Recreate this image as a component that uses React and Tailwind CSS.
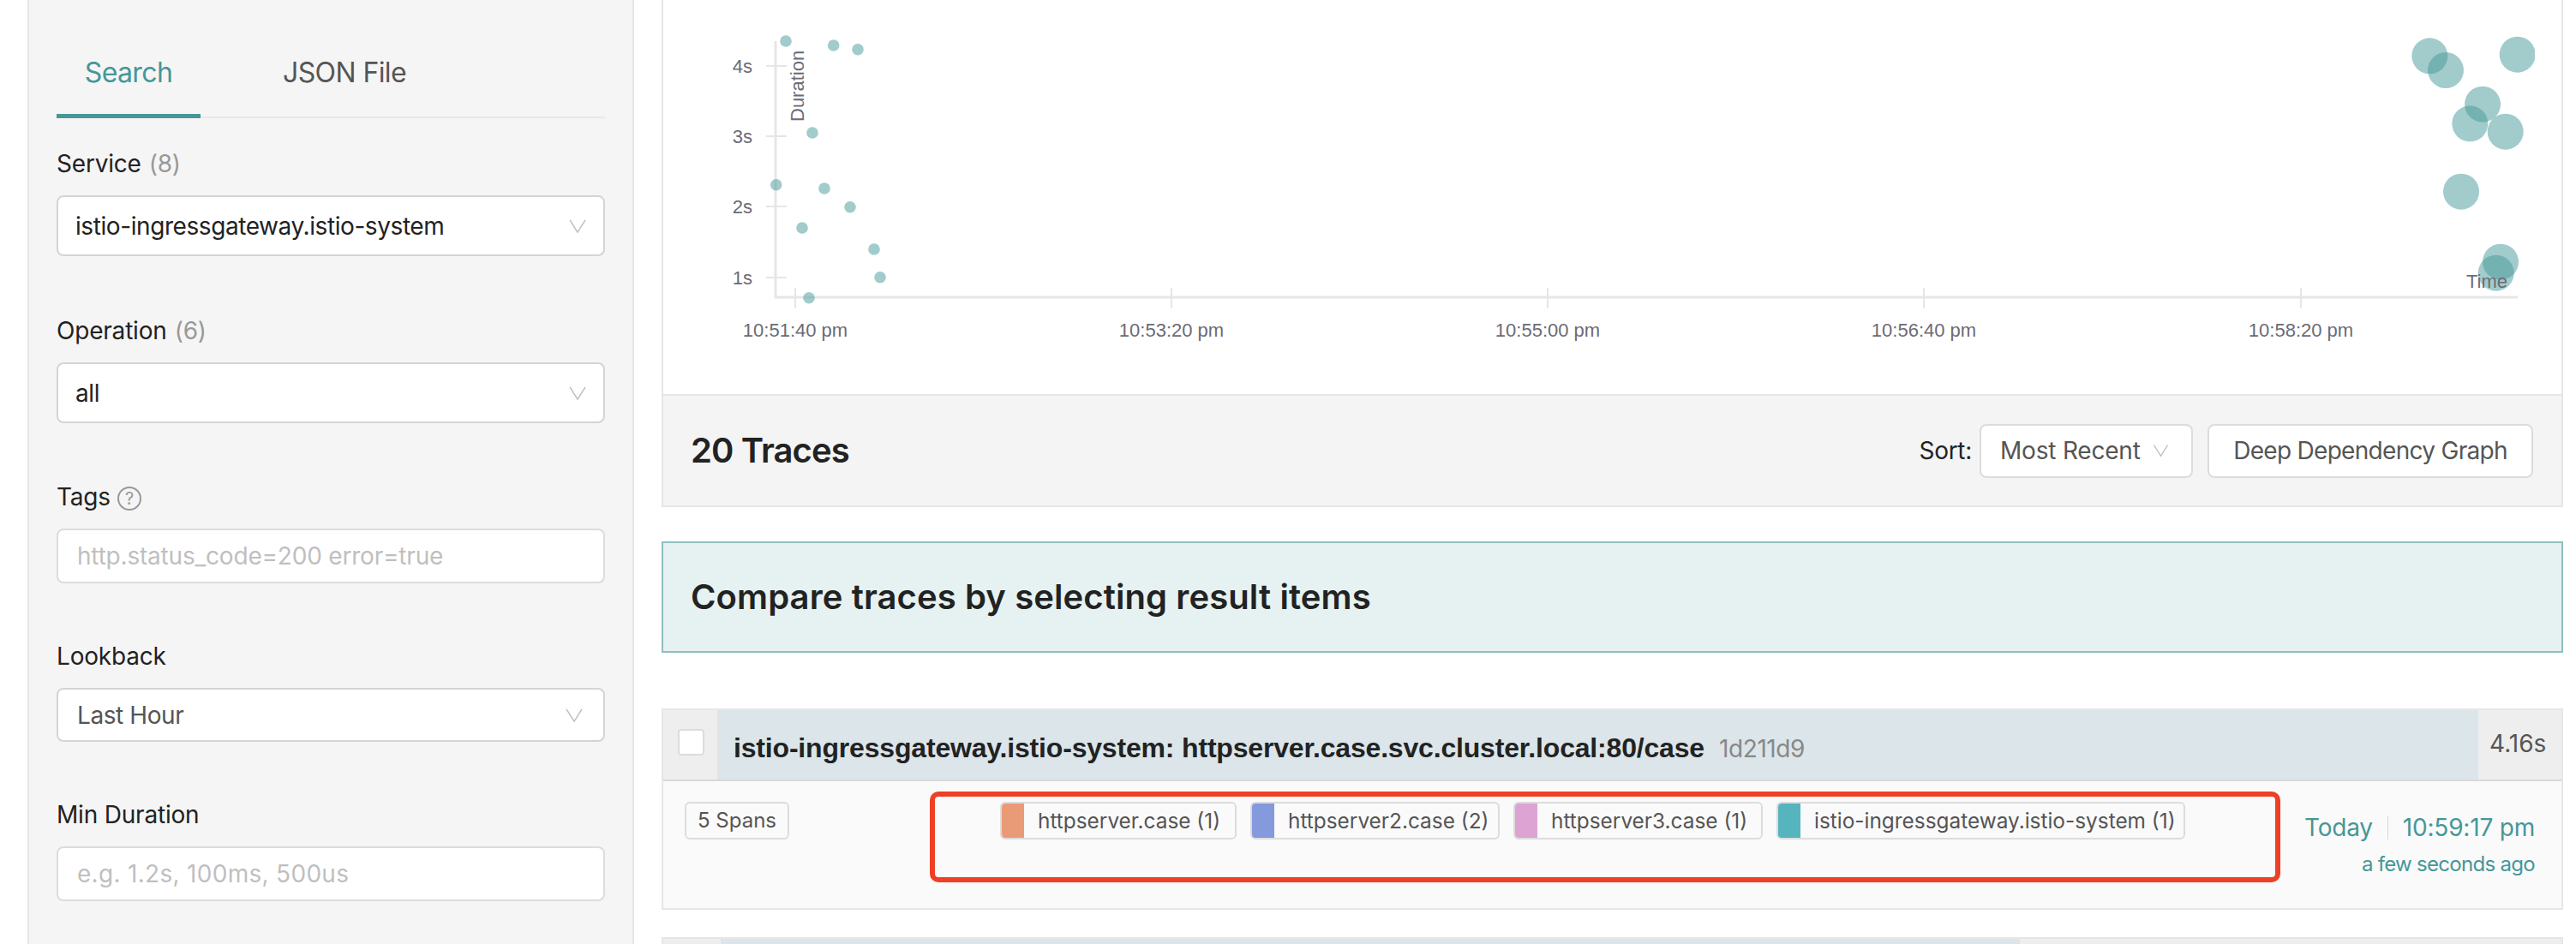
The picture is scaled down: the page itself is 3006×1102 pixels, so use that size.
import React from "react";

const smallDots = [
  [917, 48], [972.7, 53], [1001, 57.7], [948, 155], [905.7, 215.7], [962, 220],
  [992, 241.7], [936, 266], [1020, 291], [1027, 323.7], [944, 347.7],
];
const bigDots = [
  [2835.3, 65.3], [2854, 82], [2937.7, 63.7], [2897, 121.7], [2882.3, 144.3],
  [2923.7, 153.7], [2872, 223.7], [2918, 305.7], [2912.7, 318.7],
];
const yTicks = [["4s", 77], ["3s", 159], ["2s", 241], ["1s", 324]];
const xTicks = [
  ["10:51:40 pm", 928], ["10:53:20 pm", 1367], ["10:55:00 pm", 1806],
  ["10:56:40 pm", 2245], ["10:58:20 pm", 2685],
];
const services = [
  { name: "httpserver.case (1)", color: "bg-[#e99b78]", width: "w-[276px]" },
  { name: "httpserver2.case (2)", color: "bg-[#8599dd]", width: "w-[291px]" },
  { name: "httpserver3.case (1)", color: "bg-[#dda3d3]", width: "w-[291px]" },
  { name: "istio-ingressgateway.istio-system (1)", color: "bg-[#56b4bf]", width: "w-[477px]" },
];

function Chevron({ className }) {
  return (
    <svg viewBox="0 0 22 20" fill="none" stroke="#bdbdbd" strokeWidth="1.6" className={className}>
      <path d="M1 2 L11 18 L21 2" />
    </svg>
  );
}

function Field({ label, count, help, className, children }) {
  return (
    <div className={className}>
      <div className="h-[38px] mb-[18px] flex items-center text-[28px] tracking-[-0.2px] text-[#222]">
        {label}
        {count && <span className="ml-[9px] text-[#999]">{count}</span>}
        {help && (
          <span className="ml-[8px] mt-[3px] w-[28px] h-[28px] rounded-full border-2 border-[#999] flex items-center justify-center text-[20px] text-[#999]">
            ?
          </span>
        )}
      </div>
      {children}
    </div>
  );
}

function SelectBox({ value, tall, muted }) {
  return (
    <div
      className={`flex items-center justify-between bg-white border-2 border-[#d4d4d4] rounded-[8px] text-[28px] tracking-[-0.42px] ${
        tall ? "h-[71px] pl-[20px] pr-[20px] text-[#222]" : "h-[63px] pl-[22px] pr-[24px]"
      } ${muted ? "text-[#555]" : ""}`}
    >
      <span>{value}</span>
      <Chevron className="w-[20px] h-[18px]" />
    </div>
  );
}

function TextInput({ placeholder, className }) {
  return (
    <input
      readOnly
      placeholder={placeholder}
      className={`block w-full h-[64px] bg-white border-2 border-[#dcdcdc] rounded-[8px] pl-[22px] text-[28px] placeholder:text-[#bfbfbf] outline-none ${className}`}
    />
  );
}

function Sidebar() {
  return (
    <aside className="ml-[32px] w-[708px] h-full bg-[#f5f5f5] border-x-2 border-[#e6e6e6] pl-[32px] pr-[32px] font-['Inter',sans-serif]">
      <div className="flex h-[138px] border-b-2 border-[#e8e8e8] text-[32px] tracking-[-0.6px] mb-[34px]">
        <div className="w-[168px] h-[138px] border-b-[5px] border-[#459798] text-[#459798] flex justify-center pt-[63px] leading-[44px]">
          Search
        </div>
        <div className="ml-[96px] text-[#555] pt-[63px] leading-[44px]">JSON File</div>
      </div>
      <Field label="Service" count="(8)" className="mb-[68px]">
        <SelectBox value="istio-ingressgateway.istio-system" tall />
      </Field>
      <Field label="Operation" count="(6)" className="mb-[67px]">
        <SelectBox value="all" tall />
      </Field>
      <Field label="Tags" help className="mb-[66px]">
        <TextInput placeholder="http.status_code=200 error=true" className="tracking-[-0.2px]" />
      </Field>
      <Field label="Lookback" className="mb-[66px]">
        <SelectBox value="Last Hour" muted />
      </Field>
      <Field label="Min Duration">
        <TextInput placeholder="e.g. 1.2s, 100ms, 500us" className="tracking-[0.3px]" />
      </Field>
    </aside>
  );
}

function ScatterPlot() {
  return (
    <svg viewBox="774 0 2215 460" className="block w-[2215px] h-[460px] font-['Liberation_Sans',sans-serif]">
      <defs>
        <clipPath id="plot">
          <rect x="774" y="0" width="2184" height="460" />
        </clipPath>
      </defs>
      <g stroke="#e6e6e8">
        <path d="M905 48 V348" strokeWidth="3" />
        <path d="M904 347 H2938" strokeWidth="3" />
        {yTicks.map(([, y]) => (
          <path key={y} d={`M894 ${y} H918`} strokeWidth="2" />
        ))}
        {xTicks.map(([, x]) => (
          <path key={x} d={`M${x} 336 V360`} strokeWidth="2" />
        ))}
      </g>
      <g fill="#6b6b76" fontSize="22">
        {yTicks.map(([label, y]) => (
          <text key={label} x="878" y={y + 8} textAnchor="end">{label}</text>
        ))}
        {xTicks.map(([label, x]) => (
          <text key={label} x={x} y="393" textAnchor="middle">{label}</text>
        ))}
      </g>
      <g fill="#459798" fillOpacity="0.5" clipPath="url(#plot)">
        {smallDots.map(([x, y]) => (
          <circle key={x} cx={x} cy={y} r="6.8" />
        ))}
        {bigDots.map(([x, y]) => (
          <circle key={x} cx={x} cy={y} r="21" />
        ))}
      </g>
      <g fill="#6b6b76" fontSize="22">
        <text transform="translate(938 142) rotate(-90)">Duration</text>
        <text x="2878" y="336">Time</text>
      </g>
    </svg>
  );
}

function TraceCard() {
  return (
    <div className="mt-[65px] h-[235px] border-2 border-[#e6e6e6] bg-[#fafafa]">
      <div className="flex h-[83px] border-b-2 border-[#d8d8d8] bg-[#dbe5ea]">
        <div className="w-[65px] bg-[#eeeeee] border-r-2 border-[#e2e2e2] flex pl-[17px] pt-[22px]">
          <div className="w-[31px] h-[31px] bg-white border-2 border-[#dcdcdc] rounded-[4px]" />
        </div>
        <div className="flex-1 flex items-baseline pl-[17px] pt-[20px] text-[#222]">
          <span className="text-[32px] tracking-[-0.18px] font-semibold font-['Liberation_Sans',sans-serif]">
            istio-ingressgateway.istio-system: httpserver.case.svc.cluster.local:80/case
          </span>
          <span className="ml-[17px] text-[28px] tracking-[-0.4px] text-[#888] font-['Inter',sans-serif]">1d211d9</span>
        </div>
        <div className="w-[97px] bg-[#eeeeee] text-[28px] text-[#555] pl-[13px] pt-[18px] font-['Inter',sans-serif]">
          4.16s
        </div>
      </div>
      <div className="relative flex h-[150px] pl-[25px] pt-[24px] font-['Inter',sans-serif]">
        <div className="w-[368px]">
          <div className="w-[122px] h-[44px] flex items-center justify-center border-2 border-[#dcdcdc] rounded-[6px] text-[24px] text-[#555]">
            5 Spans
          </div>
        </div>
        <div className="flex gap-[16px] items-start">
          {services.map((s) => (
            <div key={s.name} className={`flex h-[44px] bg-[#fafafa] border-2 border-[#dcdcdc] rounded-[6px] overflow-hidden text-[24.4px] text-[#555] ${s.width}`}>
              <div className={`w-[28px] -my-[2px] -ml-[2px] ${s.color}`} />
              <span className="ml-[16px] leading-[40px] whitespace-nowrap">{s.name}</span>
            </div>
          ))}
        </div>
        <div className="ml-auto pr-[31px] text-right text-[#459798]">
          <div className="flex items-center justify-end h-[38px] mt-[11px] text-[28px] tracking-[-0.2px] leading-none">
            Today
            <span className="mx-[17px] w-[1px] h-[28px] bg-[#d8d8d8]" />
            10:59:17 pm
          </div>
          <div className="mt-[7px] text-[24px] tracking-[-0.7px] leading-[34px]">a few seconds ago</div>
        </div>
        <div className="absolute left-[311px] top-[12px] w-[1576px] h-[106px] border-[6px] border-[#ee4026] rounded-[10px]" />
      </div>
    </div>
  );
}

export default function App() {
  return (
    <div className="flex w-[3006px] h-[1102px] overflow-hidden bg-white">
      <Sidebar />
      <main className="ml-[32px] w-[2219px] shrink-0">
        <div className="border-x-2 border-[#e6e6e6]">
          <ScatterPlot />
          <div className="flex items-center h-[132px] bg-[#f4f4f4] border-y-2 border-[#e6e6e6] pl-[32px] font-['Inter',sans-serif]">
            <h2 className="text-[40px] tracking-[-0.9px] font-semibold text-[#222]">20 Traces</h2>
            <span className="ml-auto text-[28px] tracking-[-0.3px] text-[#222]">Sort:</span>
            <div className="ml-[9px] w-[249px] h-[63px] flex items-center justify-between pl-[22px] pr-[26px] bg-white border-2 border-[#dcdcdc] rounded-[8px] text-[28px] tracking-[-0.2px] text-[#555]">
              Most Recent
              <Chevron className="w-[19px] h-[16px]" />
            </div>
            <div className="ml-[17px] mr-[33px] w-[380px] h-[63px] flex items-center justify-center bg-white border-2 border-[#dcdcdc] rounded-[8px] text-[28px] tracking-[-0.7px] text-[#555]">
              Deep Dependency Graph
            </div>
          </div>
        </div>
        <div className="mt-[40px] h-[130px] flex items-center bg-[#e6f2f1] border-2 border-[#8fbfbf] pl-[32px] font-['Inter',sans-serif] text-[40px] tracking-[0.1px] font-semibold text-[#222]">
          Compare traces by selecting result items
        </div>
        <TraceCard />
        <div className="mt-[32px] flex h-[40px] border-2 border-[#e6e6e6] bg-[#eeeeee]">
          <div className="w-[67px]" />
          <div className="w-[1516px] bg-[#dbe5ea]" />
        </div>
      </main>
    </div>
  );
}
